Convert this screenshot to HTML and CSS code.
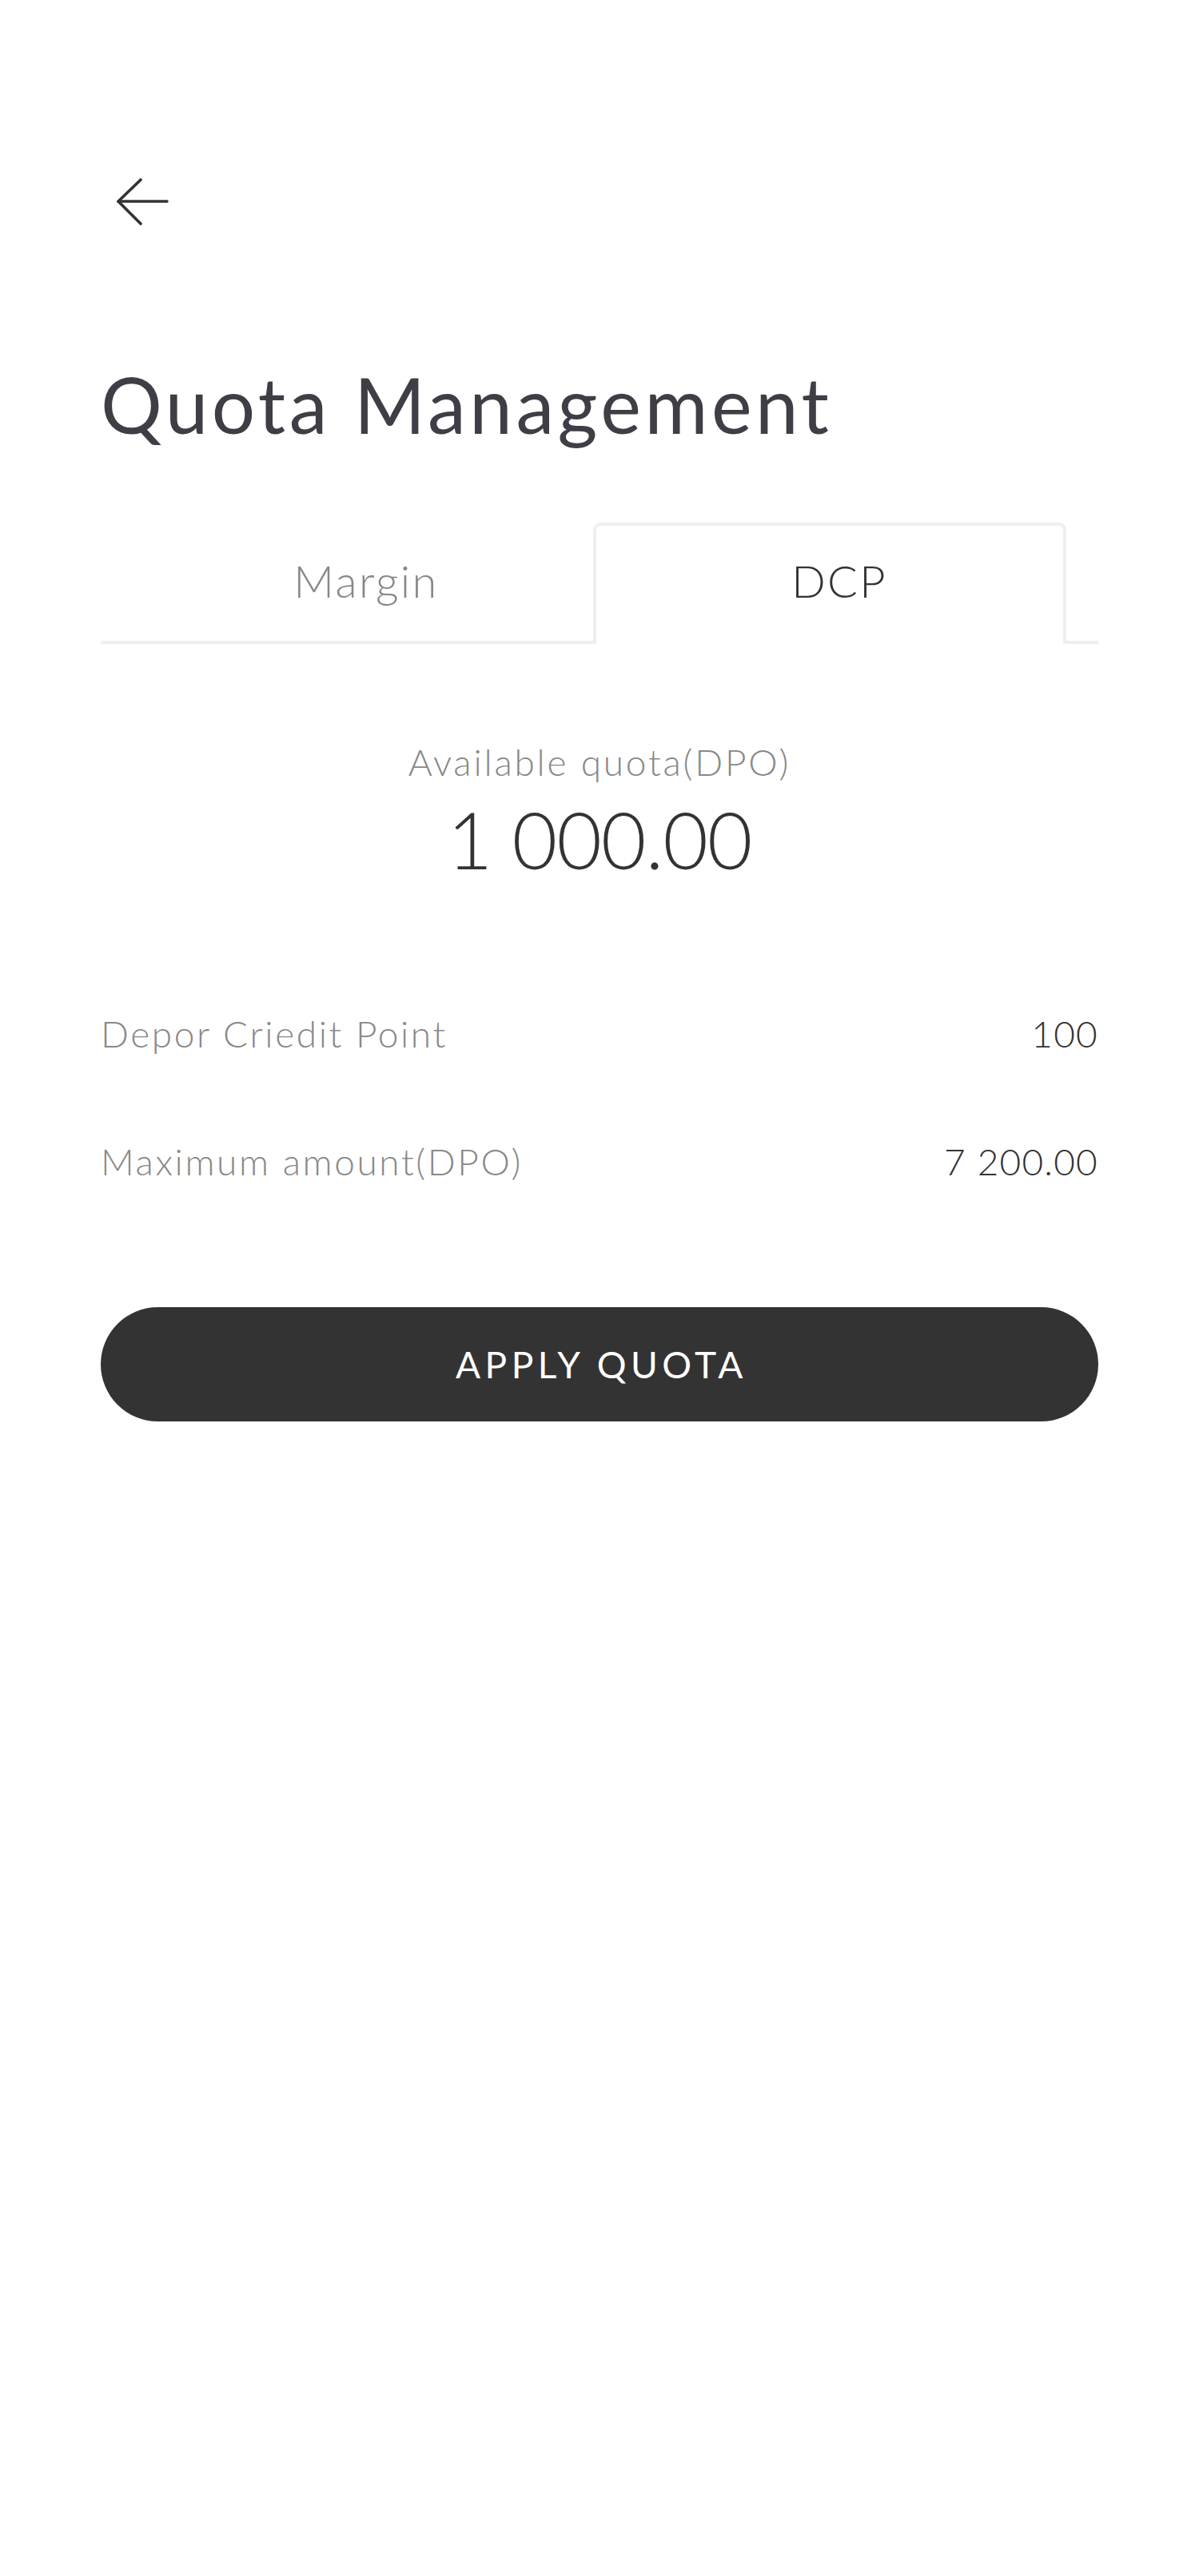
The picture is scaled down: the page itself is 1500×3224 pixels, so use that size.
FILE: index.html
```html
<!DOCTYPE html>
<html lang="en">
<head>
<meta charset="utf-8">
<title>Quota Management</title>
<link rel="stylesheet" href="styles.css">
</head>
<body>
<div class="page">
  <header class="header">
    <button class="back" aria-label="Back">
      <svg width="96" height="64" viewBox="0 0 96 64" fill="none" stroke="#333" stroke-width="3.6" stroke-linecap="round" stroke-linejoin="round">
        <path d="M50 5 L22 32 L50 60"/>
        <path d="M22 32 H83"/>
      </svg>
    </button>
  </header>
  <h1 class="title">Quota Management</h1>
  <nav class="tabs">
    <div class="tab">Margin</div>
    <div class="tab tab-active">DCP</div>
  </nav>
  <section class="summary">
    <div class="summary-label">Available quota(DPO)</div>
    <div class="summary-value">1 000.00</div>
  </section>
  <section class="rows">
    <div class="row"><span class="row-label">Depor Criedit Point</span><span class="row-value">100</span></div>
    <div class="row"><span class="row-label">Maximum amount(DPO)</span><span class="row-value">7 200.00</span></div>
  </section>
  <button class="apply">APPLY QUOTA</button>
</div>
</body>
</html>
```
FILE: styles.css
```css
* { box-sizing: border-box; }
html, body { margin: 0; padding: 0; background: #fff; }
body { font-family: Lato, "Open Sans", "Liberation Sans", sans-serif; font-weight: 300; color: #333; }
.page { padding: 0 126px; min-height: 3224px; }
.header { padding-top: 220px; height: 284px; }
.back { display: block; border: 0; background: none; padding: 0; margin: 0; width: 96px; height: 64px; cursor: pointer; }
.back svg { display: block; }
.title { margin: 164px 0 0; font-size: 96px; line-height: 115px; font-weight: 400; color: #3e3e46; letter-spacing: 4.5px; }
.tabs { display: flex; margin-top: 91px; padding-left: 24px; border-bottom: 4px solid #efefef; }
.tab { width: 592px; padding: 35px 0 42px 24px; text-align: center; font-size: 56px; line-height: 67px; color: #888; letter-spacing: 2.3px; border: 4px solid transparent; border-bottom: 0; border-radius: 9px 9px 0 0; margin-bottom: -4px; }
.tab-active { color: #333; border-color: #efefef; background: #fff; padding-bottom: 46px; }
.summary { margin-top: 120px; text-align: center; }
.summary-label { font-size: 46px; line-height: 56px; color: #888; letter-spacing: 2.8px; }
.summary-value { margin-top: 9px; font-size: 98px; line-height: 118px; color: #333; letter-spacing: -1.2px; }
.rows { margin-top: 105px; }
.row { display: flex; justify-content: space-between; align-items: center; padding: 52px 0; font-size: 46px; line-height: 56px; }
.row-label { color: #888; letter-spacing: 2.6px; }
.row-value { color: #333; letter-spacing: 1.2px; }
.apply { display: flex; align-items: center; justify-content: center; width: 100%; height: 143px; margin-top: 102px; border: 0; border-radius: 72px; background: #333; color: #fff; font-family: Lato, "Open Sans", sans-serif; font-weight: 400; font-size: 46px; line-height: 56px; letter-spacing: 5.4px; padding: 0 0 0 5px; }
```
